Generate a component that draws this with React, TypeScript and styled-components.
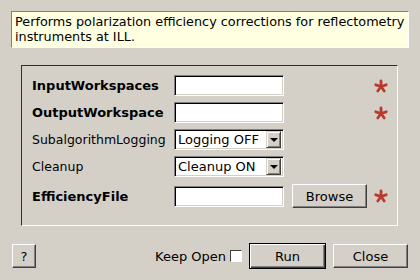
import React from 'react';
import styled, {createGlobalStyle} from "styled-components";

const GlobalStyle = createGlobalStyle`
  html, body {
    margin: 0;
    padding: 0;
    background: #d4d0c8;
  }
  body {
    font-family: "DejaVu Sans", "Liberation Sans", sans-serif;
    font-size: 13px;
    color: #000;
  }
`;

interface IProperty {
    name: string,
    mandatory: boolean,
    kind: 'text' | 'select' | 'file',
    value?: string
}

const properties: IProperty[] = [
    {name: 'InputWorkspaces', mandatory: true, kind: 'text'},
    {name: 'OutputWorkspace', mandatory: true, kind: 'text'},
    {name: 'SubalgorithmLogging', mandatory: false, kind: 'select', value: 'Logging OFF'},
    {name: 'Cleanup', mandatory: false, kind: 'select', value: 'Cleanup ON'},
    {name: 'EfficiencyFile', mandatory: true, kind: 'file'},
]

const Asterisk = () => (
    <svg width="14" height="14" viewBox="0 0 14 14">
        {[0, 72, 144, 216, 288].map(angle => (
            <line key={angle} x1="7" y1="7.5" x2="7" y2="2"
                  stroke="#b73a2c" strokeWidth="2.8" strokeLinecap="round"
                  transform={`rotate(${angle} 7 7.5)`}/>
        ))}
    </svg>
);

function App() {

    const getRows = (props: IProperty[]): JSX.Element[] => {
        return props.map(({name, mandatory, kind, value}) => (
            <Row key={name} $tall={kind === 'file'}>
                <Label $bold={mandatory}>{name}</Label>
                {kind === 'select' ? (
                    <Select>
                        <SelectText>{value}</SelectText>
                        <ArrowButton><Triangle/></ArrowButton>
                    </Select>
                ) : (
                    <TextInput/>
                )}
                <Extra>{kind === 'file' && <Button $width={75} $height={24}>Browse</Button>}</Extra>
                <Star>{mandatory && <Asterisk/>}</Star>
            </Row>
        ))
    }

    return (
        <Dialog>
            <GlobalStyle/>
            <Description>
                Performs polarization efficiency corrections for reflectometry<br/>instruments at ILL.
            </Description>
            <GroupBox>
                {getRows(properties)}
            </GroupBox>
            <BottomBar>
                <Button $width={24} $height={24}>?</Button>
                <Spacer/>
                <KeepOpen>Keep Open</KeepOpen>
                <CheckBox/>
                <Button $width={77} $height={26} $default>Run</Button>
                <Button $width={75} $height={24}>Close</Button>
            </BottomBar>
        </Dialog>
    );
}

const Dialog = styled.div`
  width: 420px;
  height: 280px;
  box-sizing: border-box;
  padding: 11px;
  display: flex;
  flex-direction: column;
`;

const Description = styled.div`
  height: 37px;
  box-sizing: border-box;
  width: 398px;
  background: #ffffe1;
  border: 1px solid;
  border-color: #808080 #ffffff #ffffff #808080;
  padding: 2px 2px 0 3px;
  font-size: 12.8px;
  line-height: 15px;
  white-space: nowrap;
  overflow: hidden;
`;

const GroupBox = styled.div`
  margin: 17px 11px 0 10px;
  height: 161px;
  box-sizing: border-box;
  border: 1px solid;
  border-color: #2e2e2e #ffffff #ffffff #2e2e2e;
  padding: 9px 0 0 10px;
  display: flex;
  flex-direction: column;
  gap: 6px;
`;

const Row = styled.div<{ $tall?: boolean }>`
  display: grid;
  grid-template-columns: 142px 110px 83px 21px;
  align-items: center;
  height: ${p => p.$tall ? 24 : 21}px;
  margin-top: ${p => p.$tall ? 1 : 0}px;
`;

const Label = styled.div<{ $bold?: boolean }>`
  font-weight: ${p => p.$bold ? 'bold' : 'normal'};
  font-size: ${p => p.$bold ? 13 : 12.5}px;
  white-space: nowrap;
`;

const sunken = `
  box-sizing: border-box;
  background: #ffffff;
  border: 1px solid;
  border-color: #808080 #ffffff #ffffff #808080;
  box-shadow: inset 1px 1px 0 #000000, inset -1px -1px 0 #d4d0c8;
`;

const TextInput = styled.div`
  ${sunken};
  width: 110px;
  height: 21px;
`;

const Select = styled.div`
  ${sunken};
  width: 110px;
  height: 21px;
  display: flex;
  align-items: center;
  padding: 2px 2px 2px 3px;
`;

const SelectText = styled.span`
  flex: 1;
  white-space: nowrap;
  overflow: hidden;
`;

const ArrowButton = styled.div`
  width: 15px;
  height: 17px;
  box-sizing: border-box;
  background: #d4d0c8;
  border: 1px solid;
  border-color: #d4d0c8 #404040 #404040 #d4d0c8;
  box-shadow: inset 1px 1px 0 #ffffff, inset -1px -1px 0 #808080;
  display: flex;
  align-items: center;
  justify-content: center;
`;

const Triangle = styled.div`
  width: 0;
  height: 0;
  border-left: 4px solid transparent;
  border-right: 4px solid transparent;
  border-top: 4px solid #000;
`;

const Extra = styled.div`
  display: flex;
  justify-content: flex-end;
`;

const Star = styled.div`
  display: flex;
  justify-content: flex-end;
  align-items: center;
`;

const Button = styled.div<{ $width: number, $height: number, $default?: boolean }>`
  width: ${p => p.$width}px;
  height: ${p => p.$height}px;
  box-sizing: border-box;
  display: flex;
  align-items: center;
  justify-content: center;
  background: #d4d0c8;
  border: 1px solid;
  border-color: ${p => p.$default ? '#000000' : '#ffffff #404040 #404040 #ffffff'};
  box-shadow: ${p => p.$default
          ? 'inset 1px 1px 0 #ffffff, inset -1px -1px 0 #404040, inset -2px -2px 0 #808080'
          : 'inset -1px -1px 0 #808080'};
`;

const BottomBar = styled.div`
  margin: 17px 1px 0 1px;
  display: flex;
  align-items: center;
  gap: 7px;
`;

const Spacer = styled.div`
  flex: 1;
`;

const KeepOpen = styled.span`
  margin-right: -3px;
`;

const CheckBox = styled.div`
  width: 12px;
  height: 12px;
  box-sizing: border-box;
  background: #ffffff;
  border: 1px solid;
  border-color: #404040 #ffffff #ffffff #404040;
`;

export default App;
